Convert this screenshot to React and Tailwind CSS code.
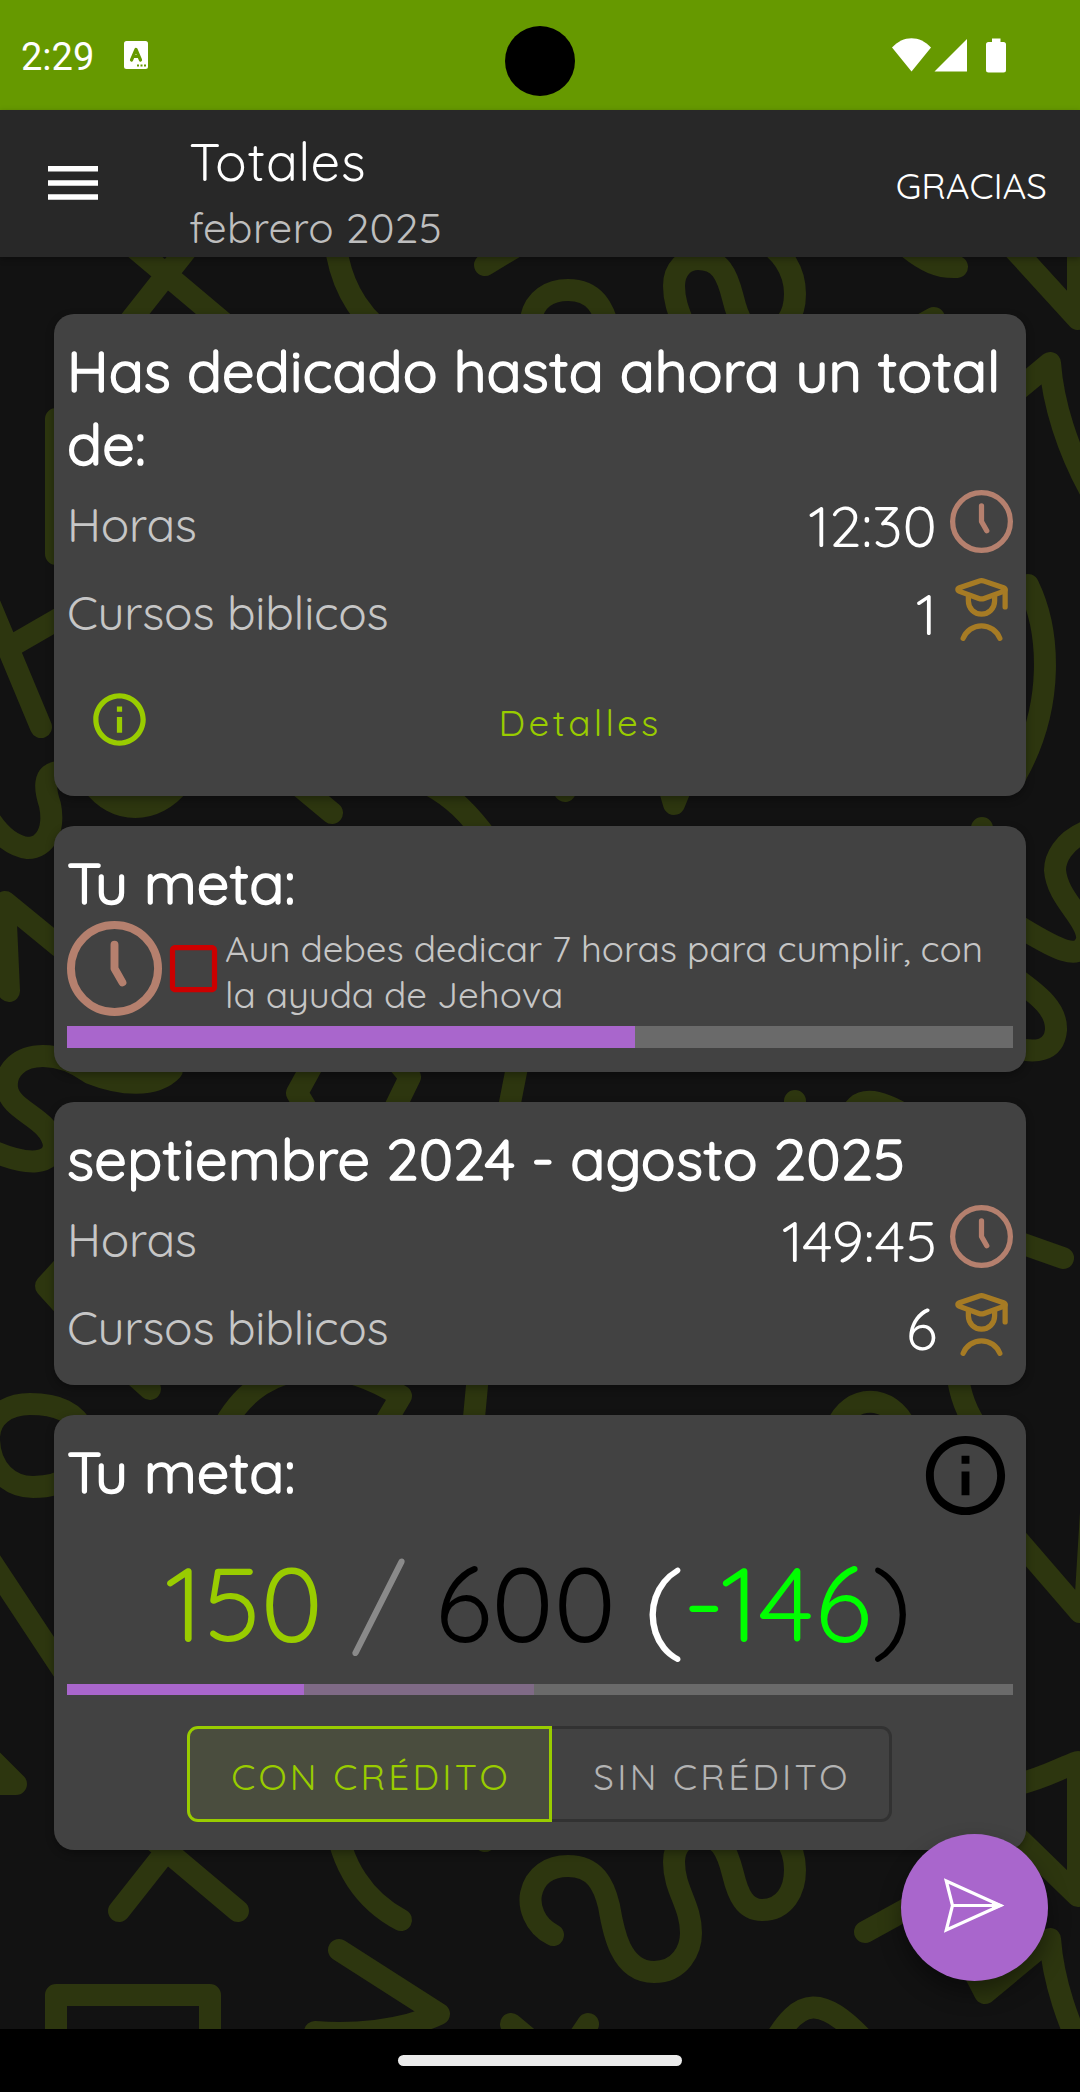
import React from "react";

const DOODLE = [
  // left edge
  "M56 419H210V554H56Z",
  "M-12 600L41 727M8 648L60 618",
  "M60 772C42 772 45 790 50 805C55 830 45 848 28 848C12 846 0 835 -10 820",
  "M60 947L5 902L9 991",
  "M172 1070C155 1088 120 1085 90 1073C75 1062 60 1056 43 1056C20 1056 5 1070 7 1088C10 1112 50 1117 54 1145C53 1164 30 1168 -12 1149",
  "M66 1264L46 1286L66 1308",
  "M85 1432C75 1412 58 1404 30 1404C8 1404 -12 1416 -11 1440C-10 1470 10 1487 33 1487C45 1487 60 1485 72 1475",
  "M-12 1557L64 1672",
  "M-12 1756L16 1784L-12 1784",
  // between the cards
  "M92 783C115 815 155 815 180 783M290 778L332 813M430 785C452 797 468 812 490 842",
  "M560 770L565 791M664 770L674 804L688 770M982 828V850",
  "M314 1062L297 1093L312 1118M394 1058L410 1077L390 1118M518 1062L507 1118",
  "M795 1101V1120M850 1120C855 1094 878 1098 910 1118",
  "M120 1362L150 1389M225 1424C245 1390 272 1372 312 1368C345 1368 372 1378 401 1396L382 1428M478 1375L473 1428",
  "M836 1428C850 1393 890 1393 906 1428M957 1372C960 1395 966 1412 980 1432",
  // right edge
  "M1028 585C1050 630 1055 705 1016 775",
  "M1090 830C1062 840 1055 860 1055 870C1057 900 1090 920 1087 940C1080 965 1050 945 1018 926",
  "M1015 978C1040 996 1057 1010 1056 1030C1054 1052 1035 1053 1015 1048",
  "M1015 1241L1063 1258",
  "M1016 1538L1080 1612M1093 1480L1085 1610",
  "M1015 1785C1045 1778 1060 1768 1078 1762V1896L1015 1835",
];

const REPEATED = [
  "M119 335L190 245M238 335L130 244",
  "M335 240C340 290 365 325 401 344",
  "M485 265L530 238",
  "M339 374L439 438C400 456 350 459 315 456M511 448L535 468M588 448L560 490M773 468C800 420 822 420 864 464",
  "M553 359C533 349 529 329 531 318C535 299 550 290 568 290C595 290 604 309 609 330C613 354 620 396 654 396C680 396 691 374 691 357C691 329 674 314 674 286C674 269 685 259 698 259C720 259 727 274 733 298C738 319 745 334 762 334C785 334 795 314 795 294C795 269 780 249 760 239",
  "M957 267C940 268 925 262 905 245",
  "M865 356L934 318L985 417L1050 363C1053 404 1068 450 1090 490",
];

function Backdrop() {
  return (
    <svg viewBox="0 257 1080 1772" className="absolute inset-0 h-full w-full" fill="none" stroke="#2d360f" strokeWidth="22" strokeLinecap="round" strokeLinejoin="round">
      {DOODLE.map((d) => <path key={d} d={d} />)}
      {REPEATED.map((d) => <path key={d} d={d} />)}
      <path d="M1015 250L1078 319V240" />
      <g transform="translate(0 1576)">
        {REPEATED.map((d) => <path key={d} d={d} />)}
        <path d="M56 419H210V554H56Z" />
      </g>
    </svg>
  );
}

function Clock({ className }) {
  return (
    <svg viewBox="0 0 24 24" className={className} fill="none" stroke="#b5806e" strokeWidth="2" strokeLinecap="round" strokeLinejoin="round">
      <circle cx="12" cy="12" r="11" />
      <path d="M12 6v6l2 3.5" />
    </svg>
  );
}

function Student({ className }) {
  return (
    <svg viewBox="0 0 24 24" className={className} fill="none" stroke="#a67b24" strokeWidth="2" strokeLinecap="round" strokeLinejoin="round">
      <path d="M11 1.2a3 3 0 0 1 2 0l7.400 2.500c.8.3.8 1.100 0 1.400L13 7.800a3 3 0 0 1-2 0L3.600 5.100c-.8-.3-.8-1.100 0-1.400z" />
      <path d="M21 4.600V11" />
      <path d="M7 7.200V8.800a5 5 0 0 0 10 0V7.200" />
      <path d="M5 23a7.500 7.500 0 0 1 14 0" />
    </svg>
  );
}

function Info({ className }) {
  return (
    <svg viewBox="0 0 24 24" className={className} fill="currentColor">
      <path d="M11 7h2v2h-2zm0 4h2v6h-2zm1-9C6.480 2 2 6.480 2 12s4.480 10 10 10 10-4.480 10-10S17.520 2 12 2zm0 18c-4.410 0-8-3.590-8-8s3.590-8 8-8 8 3.590 8 8-3.590 8-8 8z" />
    </svg>
  );
}

function Card({ className, children }) {
  return (
    <section className={`relative flex flex-col rounded-[20px] bg-[#424242] px-[13px] pt-5 shadow-[0_3px_8px_rgba(0,0,0,0.32)] ${className}`}>
      {children}
    </section>
  );
}

function Title({ className = "tracking-[0.15px]", children }) {
  return (
    <h2 className={`text-[57.75px] leading-[73px] font-normal text-white [-webkit-text-stroke:1.6px_white] ${className}`}>
      {children}
    </h2>
  );
}

function Row({ label, value, icon }) {
  return (
    <div className="flex h-[88px] items-start">
      <span className="mt-[15px] flex-1 text-[47.25px] leading-[60px] tracking-[-0.25px] text-[#c6c6c6]">{label}</span>
      <span className="mt-[9px] mr-[13px] text-[57.75px] leading-[72px] text-white">{value}</span>
      <span className="mt-[10px]">{icon}</span>
    </div>
  );
}

export default function App() {
  return (
    <div className="flex h-[2092px] w-[1080px] flex-col overflow-hidden bg-black font-['Quicksand','Lato',sans-serif] font-normal">
      <div className="relative flex h-[110px] items-center bg-[#669900] pl-[21px]">
        <span className="pt-[3px] font-['Roboto',sans-serif] text-[38px] leading-[44px] text-white">2:29</span>
        <svg viewBox="0 0 24 28" className="ml-[30px] h-7 w-6" fill="none">
          <rect width="24" height="28" rx="2.5" fill="#fff" />
          <path d="M7.500 19L12 8.500L16.500 19M9 15.500H15" stroke="#669900" strokeWidth="3.2" strokeLinecap="round" strokeLinejoin="round" />
          <path d="M13 24.500h2M16.500 24.500h2M20 24.500h2" stroke="#669900" strokeWidth="2.2" />
        </svg>
        <div className="absolute top-[26px] left-[505px] h-[70px] w-[70px] rounded-full bg-black" />
        <svg viewBox="0 0 116 36" className="ml-auto mr-[72px] h-9 w-[116px]" fill="#fff">
          <path d="M0 10.500C11 -2 28 -2 39 10.500L19.500 34.500Z" />
          <path d="M42.500 34.500L75 2V34.500Z" />
          <path d="M100 1.500h8.500v3.500h3a2.500 2.500 0 0 1 2.500 2.500v25.500a2.500 2.500 0 0 1-2.500 2.500h-15a2.500 2.500 0 0 1-2.500-2.500v-25.500a2.500 2.500 0 0 1 2.500-2.500h3.500z" />
        </svg>
      </div>

      <header className="relative z-10 flex h-[147px] items-start bg-[#282828] shadow-[0_2px_6px_rgba(0,0,0,0.3)]">
        <svg viewBox="0 0 50 34" className="mt-[56px] ml-[48px] h-[34px] w-[50px]" fill="#fff">
          <path d="M0 0h50v5.500H0zM0 14.200h50v5.500H0zM0 28.300h50v5.500H0z" />
        </svg>
        <div className="ml-[91px] flex flex-col pt-[18px]">
          <h1 className="text-[52.5px] leading-[66px] tracking-[0.0125em] text-white">Totales</h1>
          <p className="mt-2 text-[42px] leading-[52px] tracking-[0.009375em] text-[#bebebe]">febrero 2025</p>
        </div>
        <span className="mt-[52px] mr-[33px] ml-auto text-[36.75px] leading-[46px] text-white">GRACIAS</span>
      </header>

      <main className="relative h-[1772px] bg-[#121212] px-[54px] pt-[57px]">
        <Backdrop />
        <Card className="h-[482px]">
          <Title className="tracking-[0.13px]">Has dedicado hasta ahora un total de:</Title>
          <Row label="Horas" value="12:30" icon={<Clock className="h-[63px] w-[63px]" />} />
          <Row label="Cursos biblicos" value="1" icon={<Student className="h-[63px] w-[63px]" />} />
          <div className="mt-8 flex h-[63px] items-start pl-[21px] text-[#99cc00]">
            <Info className="h-[63px] w-[63px]" />
            <span className="mt-[11px] flex-1 pr-1 text-center text-[36.75px] leading-[46px] tracking-[3.28px]">Detalles</span>
          </div>
        </Card>

        <Card className="mt-[30px] h-[246px]">
          <Title>Tu meta:</Title>
          <div className="mt-0.5 flex h-[95px] items-center">
            <Clock className="h-[95px] w-[95px]" />
            <svg viewBox="0 0 24 24" className="h-[63px] w-[63px]" fill="#cc0000">
              <path d="M19 5v14H5V5h14m0-2H5c-1.100 0-2 .900-2 2v14c0 1.100.900 2 2 2h14c1.100 0 2-.900 2-2V5c0-1.100-.900-2-2-2z" />
            </svg>
            <p className="mt-1 flex-1 text-[36.75px] leading-[46px] tracking-[-0.03px] text-[#c6c6c6]">
              Aun debes dedicar 7 horas para cumplir, con la ayuda de Jehova
            </p>
          </div>
          <div className="mt-[10px] h-[22px] bg-[#6a6a6a]">
            <div className="h-full w-[60%] bg-[#a966cc]" />
          </div>
        </Card>

        <Card className="mt-[30px] h-[283px]">
          <Title className="tracking-[0.28px]">septiembre 2024 - agosto 2025</Title>
          <Row label="Horas" value="149:45" icon={<Clock className="h-[63px] w-[63px]" />} />
          <Row label="Cursos biblicos" value="6" icon={<Student className="h-[63px] w-[63px]" />} />
        </Card>

        <Card className="mt-[30px] h-[435px]">
          <div className="flex h-[102px] items-start justify-between">
            <Title>Tu meta:</Title>
            <Info className="-mt-[7px] h-[95px] w-[95px] text-black" />
          </div>
          <p className="pr-1 text-center text-[105px] leading-[131px] whitespace-pre text-black">
            <span className="text-[#99cc00]">150</span>
            <span className="text-[#8a8a8a]"> / </span>
            <span className="tracking-[-0.3px]">600 </span>
            <span className="text-white">(</span>
            <span className="tracking-[1px] text-[#00ff00]">-146</span>
            <span>)</span>
          </p>
          <div className="mt-4 flex h-[11px] bg-[#6a6a6a]">
            <div className="h-full w-[25.1%] bg-[#a966cc]" />
            <div className="h-full w-[24.3%] bg-[#7f6a86]" />
          </div>
          <div className="mt-[31px] ml-[120px] flex h-24 text-[36.75px] tracking-[3.28px]">
            <div className="flex w-[365px] items-center justify-center rounded-l-[11px] border-[3px] border-[#99cc00] bg-[#4a4d3e] pt-1.5 pl-[3px] text-[#99cc00]">CON CRÉDITO</div>
            <div className="flex w-[340px] items-center justify-center rounded-r-[11px] border-[3px] border-l-0 border-[#323232] pt-1.5 pl-[3px] text-[#b3b3b3]">SIN CRÉDITO</div>
          </div>
        </Card>

        <button className="absolute right-8 bottom-12 flex h-[147px] w-[147px] items-center justify-center rounded-full bg-[#a966cc] shadow-[0_12px_22px_rgba(0,0,0,0.4)]">
          <svg viewBox="0 0 61 55" className="mb-1 h-[55px] w-[61px]" fill="none" stroke="#fff" strokeWidth="3.2">
            <path d="M2.300 3L56.500 27.500L2.300 52L8.500 27.500ZM8.500 27.500H54" />
            <path d="M48 22.500L60 27.500L48 32.500Z" fill="#fff" stroke="none" />
          </svg>
        </button>
      </main>

      <div className="flex h-[63px] justify-center pt-[26px]">
        <div className="h-[11px] w-[284px] rounded-full bg-[#ebebeb]" />
      </div>
    </div>
  );
}
